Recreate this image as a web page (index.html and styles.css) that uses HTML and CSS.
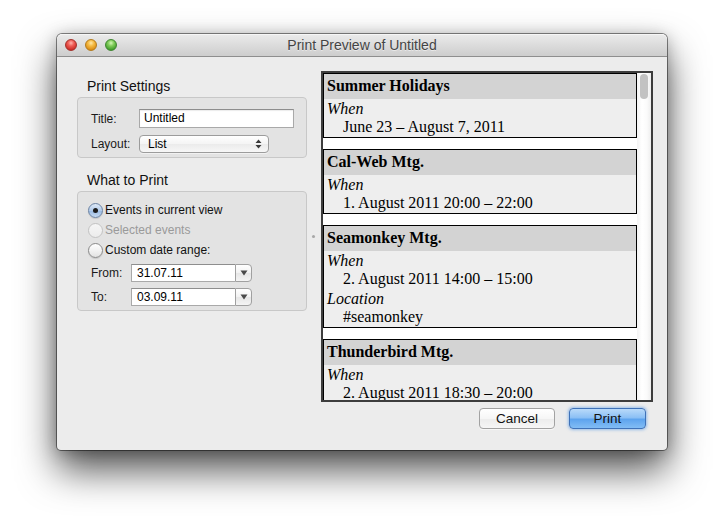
FILE: index.html
```html
<!DOCTYPE html>
<html>
<head>
<meta charset="utf-8">
<title>Print Preview of Untitled</title>
<link rel="stylesheet" href="styles.css">
</head>
<body>
<div class="window">
  <div class="titlebar">
    <div class="lights">
      <span class="light red"></span>
      <span class="light yellow"></span>
      <span class="light green"></span>
    </div>
    <div class="wtitle">Print Preview of Untitled</div>
  </div>
  <div class="content">
    <div class="left">
      <div class="section-label">Print Settings</div>
      <div class="group group-settings">
        <div class="row">
          <span class="lbl lbl-wide">Title:</span>
          <span class="textfield">Untitled</span>
        </div>
        <div class="row row-layout">
          <span class="lbl lbl-wide">Layout:</span>
          <span class="popup">
            <span class="popup-text">List</span>
            <svg class="popup-arrows" width="7" height="10" viewBox="0 0 7 10"><path d="M3.5 0.5 L6.5 4 H0.5 Z M3.5 9.5 L6.5 6 H0.5 Z" fill="#3a3a3a"/></svg>
          </span>
        </div>
      </div>
      <div class="section-label section-label-2">What to Print</div>
      <div class="group group-print">
        <div class="radio-row"><span class="radio checked"></span><span>Events in current view</span></div>
        <div class="radio-row disabled"><span class="radio"></span><span>Selected events</span></div>
        <div class="radio-row"><span class="radio"></span><span>Custom date range:</span></div>
        <div class="row row-from">
          <span class="lbl lbl-narrow">From:</span>
          <span class="combo"><span class="combo-field">31.07.11</span><span class="combo-btn"><svg width="8" height="6" viewBox="0 0 8 6"><path d="M0.5 0.5 H7.5 L4 5.5 Z" fill="#4a4a4a"/></svg></span></span>
        </div>
        <div class="row row-to">
          <span class="lbl lbl-narrow">To:</span>
          <span class="combo"><span class="combo-field">03.09.11</span><span class="combo-btn"><svg width="8" height="6" viewBox="0 0 8 6"><path d="M0.5 0.5 H7.5 L4 5.5 Z" fill="#4a4a4a"/></svg></span></span>
        </div>
      </div>
    </div>
    <div class="splitter"><span class="split-dot"></span></div>
    <div class="right">
      <div class="preview">
        <div class="pages">
          <div class="card">
            <div class="card-head">Summer Holidays</div>
            <div class="card-body">
              <div class="field">When</div>
              <div class="value">June 23 – August 7, 2011</div>
            </div>
          </div>
          <div class="card">
            <div class="card-head">Cal-Web Mtg.</div>
            <div class="card-body">
              <div class="field">When</div>
              <div class="value">1. August 2011 20:00 – 22:00</div>
            </div>
          </div>
          <div class="card">
            <div class="card-head">Seamonkey Mtg.</div>
            <div class="card-body">
              <div class="field">When</div>
              <div class="value">2. August 2011 14:00 – 15:00</div>
              <div class="field">Location</div>
              <div class="value">#seamonkey</div>
            </div>
          </div>
          <div class="card">
            <div class="card-head">Thunderbird Mtg.</div>
            <div class="card-body">
              <div class="field">When</div>
              <div class="value">2. August 2011 18:30 – 20:00</div>
            </div>
          </div>
        </div>
        <div class="scrollbar"><div class="thumb"></div></div>
      </div>
      <div class="buttons">
        <button class="btn btn-cancel">Cancel</button>
        <button class="btn btn-print">Print</button>
      </div>
    </div>
  </div>
</div>
</body>
</html>
```
FILE: styles.css
```css
html, body {
  margin: 0;
  padding: 0;
  background: #ffffff;
}
html {
  height: 100%;
}
body {
  box-sizing: border-box;
  min-height: 529px;
  height: 100%;
  padding: 34px 0 0 57px;
  font-family: "Liberation Sans", Arial, sans-serif;
  color: #000;
}
.window {
  width: 610px;
  height: 416px;
  background: #ececec;
  border-radius: 5px 5px 4px 4px;
  box-shadow: 0 0 0 1px rgba(0,0,0,0.45), 0 20px 38px rgba(0,0,0,0.68), 0 2px 16px rgba(0,0,0,0.25);
  display: flex;
  flex-direction: column;
  overflow: hidden;
}
.titlebar {
  height: 22px;
  flex: none;
  border-bottom: 1px solid #8e8e8e;
  background: linear-gradient(#ebebeb, #dcdcdc 50%, #cdcdcd);
  box-shadow: inset 0 1px 0 #f6f6f6;
  border-radius: 5px 5px 0 0;
  display: flex;
  align-items: center;
  position: relative;
}
.lights {
  display: flex;
  gap: 8px;
  padding-left: 8px;
}
.light {
  width: 12px;
  height: 12px;
  border-radius: 50%;
  box-sizing: border-box;
}
.red {
  background: radial-gradient(circle at 50% 30%, #ffb3ad 0, #ef5d55 35%, #c92a24 80%, #d24a40 100%);
  border: 1px solid #a3302a;
}
.yellow {
  background: radial-gradient(circle at 50% 30%, #ffe7a8 0, #f5bb43 35%, #d98a13 80%, #e9a531 100%);
  border: 1px solid #b37a1b;
}
.green {
  background: radial-gradient(circle at 50% 30%, #d3f6b8 0, #80cc59 35%, #3f9a2a 80%, #63b446 100%);
  border: 1px solid #3e8530;
}
.wtitle {
  position: absolute;
  left: 0;
  right: 0;
  top: 0;
  text-align: center;
  line-height: 22px;
  font-size: 14px;
  color: #444;
  text-shadow: 0 1px 0 rgba(255,255,255,0.5);
}
.content {
  display: flex;
  padding: 14px 14px 21px 20px;
}
.left {
  width: 230px;
  padding-top: 7px;
  font-size: 12px;
}
.section-label {
  font-size: 14px;
  line-height: 16px;
  padding-left: 10px;
  margin-bottom: 3px;
  color: #111;
}
.section-label-2 {
  margin-top: 14px;
}
.group {
  box-sizing: border-box;
  width: 230px;
  background: #e3e3e3;
  border: 1px solid #c8c8c8;
  border-radius: 4px;
}
.group-settings {
  height: 61px;
  padding: 11px 0 0 13px;
}
.group-print {
  height: 120px;
  padding: 8px 0 0 10px;
}
.row {
  display: flex;
  align-items: center;
}
.row-layout {
  margin-top: 7px;
}
.lbl {
  color: #1a1a1a;
}
.lbl-wide { width: 48px; }
.lbl-narrow { width: 40px; }
.textfield {
  box-sizing: border-box;
  width: 155px;
  height: 19px;
  background: #fff;
  border: 1px solid #a9a9a9;
  border-top-color: #8e8e8e;
  padding-left: 4px;
  line-height: 17px;
  box-shadow: inset 0 1px 1px rgba(0,0,0,0.08);
}
.popup {
  box-sizing: border-box;
  width: 130px;
  height: 18px;
  border: 1px solid #9c9c9c;
  border-radius: 4px;
  background: linear-gradient(#ffffff, #f4f4f4 50%, #ebebeb 51%, #f7f7f7);
  box-shadow: 0 1px 0 rgba(255,255,255,0.5);
  display: flex;
  align-items: center;
  justify-content: space-between;
  padding: 0 6px 0 8px;
}
.popup-text { line-height: 16px; }
.popup-arrows { display: block; }
.radio-row {
  display: flex;
  align-items: center;
  height: 20px;
  gap: 2px;
  color: #111;
}
.radio-row.disabled { color: #9a9a9a; }
.radio {
  box-sizing: border-box;
  width: 15px;
  height: 15px;
  border-radius: 50%;
  border: 1px solid #8a8a8a;
  background: linear-gradient(#ffffff, #f2f2f2 50%, #e2e2e2);
  box-shadow: 0 1px 1px rgba(0,0,0,0.12);
  display: flex;
  align-items: center;
  justify-content: center;
}
.radio.checked {
  border-color: #6a82a3;
  background: linear-gradient(#dfeaf7, #b2cbea 50%, #98b9e2 51%, #c6daf1);
}
.radio.checked::after {
  content: "";
  width: 5px;
  height: 5px;
  border-radius: 50%;
  background: #1c1c1c;
}
.disabled .radio {
  border-color: #c3c3c3;
  background: linear-gradient(#f6f6f6, #ececec);
  box-shadow: none;
}
.row-from { margin-top: 4px; padding-left: 3px; }
.row-to { margin-top: 6px; padding-left: 3px; }
.combo {
  display: flex;
  width: 121px;
  height: 18px;
}
.combo-field {
  box-sizing: border-box;
  flex: 1;
  background: #fff;
  border: 1px solid #a9a9a9;
  border-top-color: #8e8e8e;
  border-right: none;
  padding-left: 5px;
  line-height: 16px;
}
.combo-btn {
  box-sizing: border-box;
  width: 17px;
  border: 1px solid #a0a0a0;
  border-radius: 0 4px 4px 0;
  background: linear-gradient(#ffffff, #f2f2f2 50%, #e6e6e6 51%, #f4f4f4);
  display: flex;
  align-items: center;
  justify-content: center;
}
.combo-btn svg { display: block; }
.splitter {
  width: 14px;
  height: 331px;
  display: flex;
  align-items: center;
  justify-content: center;
  padding-right: 1px;
}
.split-dot {
  width: 3px;
  height: 3px;
  border-radius: 50%;
  background: #a8a8a8;
}
.right {
  width: 332px;
}
.preview {
  box-sizing: border-box;
  width: 332px;
  height: 331px;
  border: 2px solid #3d3d3d;
  background: #fff;
  display: flex;
  overflow: hidden;
}
.pages {
  width: 314px;
  overflow: hidden;
  font-family: "Liberation Serif", "Times New Roman", serif;
  font-size: 16px;
}
.card {
  border: 1px solid #000;
  background: #eeeeee;
  margin-bottom: 11px;
}
.card-head {
  height: 25px;
  line-height: 24px;
  background: #d3d3d3;
  font-weight: bold;
  padding-left: 3px;
}
.card-body {
  padding: 0 3px 0 3px;
}
.field {
  font-style: italic;
  line-height: 19px;
}
.value {
  line-height: 18px;
  padding: 0 0 1px 16px;
}
.scrollbar {
  width: 14px;
  background: linear-gradient(90deg, #f3f3f3, #ffffff 35%, #fbfbfb 70%, #eeeeee);
  padding-top: 1px;
}
.thumb {
  width: 8px;
  height: 25px;
  margin-left: 3px;
  border-radius: 4px;
  background: #c2c2c2;
}
.buttons {
  display: flex;
  justify-content: flex-end;
  gap: 14px;
  margin-top: 6px;
  padding-right: 7px;
}
.btn {
  box-sizing: border-box;
  height: 21px;
  font-family: "Liberation Sans", Arial, sans-serif;
  font-size: 13.5px;
  line-height: 19px;
  padding: 0;
  border-radius: 4px;
  color: #111;
}
.btn-cancel {
  width: 76px;
  border: 1px solid #a2a2a2;
  background: linear-gradient(#ffffff, #f6f6f6 50%, #ececec 51%, #f6f6f6);
  box-shadow: 0 1px 0 rgba(255,255,255,0.6);
}
.btn-print {
  width: 77px;
  border: 1px solid #3f72b8;
  background: linear-gradient(#b9daf9, #8cc0f5 45%, #5ea4ee 55%, #82bdf5);
  box-shadow: 0 0 3px 1px rgba(80,150,230,0.55);
}
```
